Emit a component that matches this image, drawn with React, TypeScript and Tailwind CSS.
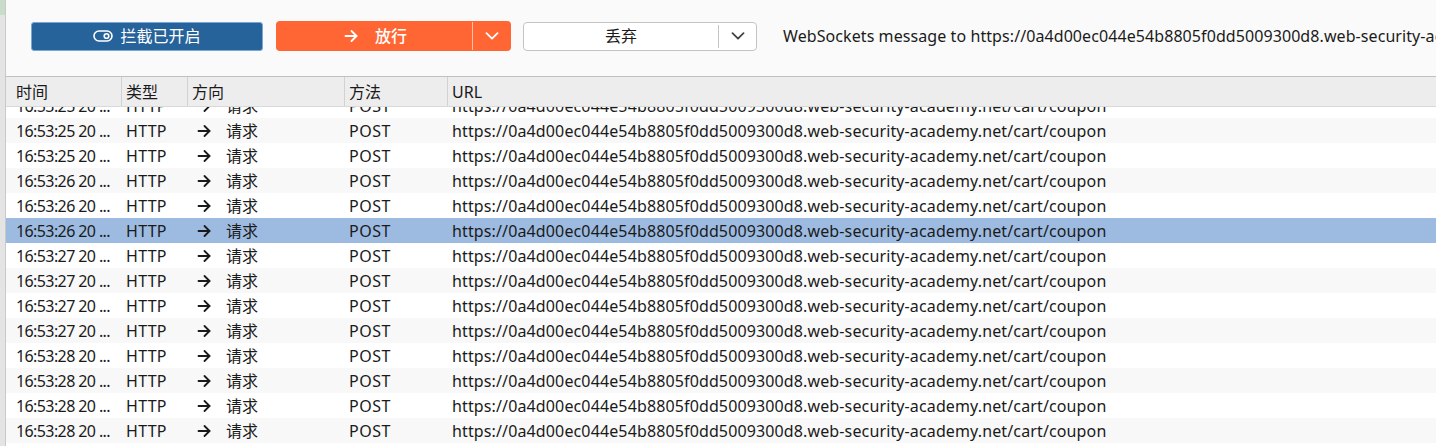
import React from "react";

const URL = "https://0a4d00ec044e54b8805f0dd5009300d8.web-security-academy.net/cart/coupon";
const times = [
  "16:53:25",
  "16:53:25",
  "16:53:25",
  "16:53:26",
  "16:53:26",
  "16:53:26",
  "16:53:27",
  "16:53:27",
  "16:53:27",
  "16:53:27",
  "16:53:28",
  "16:53:28",
  "16:53:28",
  "16:53:28",
  "16:53:28",
];

function Arrow({ className = "" }: { className?: string }) {
  return (
    <svg width="14" height="14" viewBox="0 0 14 14" className={className} fill="none" stroke="currentColor" strokeWidth="1.8" strokeLinecap="round" strokeLinejoin="round">
      <path d="M1.5 7h11" />
      <path d="M7.5 2l5 5-5 5" />
    </svg>
  );
}

function Chevron({ className = "" }: { className?: string }) {
  return (
    <svg width="14" height="8" viewBox="0 0 14 8" className={className} fill="none" stroke="currentColor" strokeWidth="1.8" strokeLinecap="round" strokeLinejoin="round">
      <path d="M1.5 1.2l5.5 5.5 5.5-5.5" />
    </svg>
  );
}

function ToggleIcon() {
  return (
    <svg width="20" height="12" viewBox="0 0 20 12" fill="none" stroke="white" strokeWidth="1.6">
      <rect x="1" y="1" width="18" height="10" rx="5" />
      <circle cx="13.5" cy="6" r="2.3" />
    </svg>
  );
}

export default function App() {
  const font = { fontFamily: '"Noto Sans", "Noto Sans CJK SC", sans-serif' };
  return (
    <div className="flex h-[446px] w-[1436px] overflow-hidden bg-white text-[16px] text-[#1a1a1a]" style={font}>
      <div className="flex w-[6px] shrink-0 flex-col border-r border-[#c9c9c9] bg-[#e4e4e4]">
        <div className="h-[15px] bg-[#c7dcc9]" />
      </div>
      <div className="flex min-w-0 flex-1 flex-col">
        <div className="flex h-[76px] shrink-0 items-center overflow-hidden whitespace-nowrap bg-[#fafafa] pb-[4px] pl-[25px]">
          <button className="flex h-[29px] w-[232px] shrink-0 items-center justify-center gap-[7px] rounded-[3px] border border-[#79a6d6] bg-[#27639b] text-white">
            <ToggleIcon />
            <span>拦截已开启</span>
          </button>
          <div className="ml-[13px] flex h-[30px] w-[235px] shrink-0 overflow-hidden rounded-[4px] bg-[#ff6633] text-white">
            <div className="flex flex-1 items-center justify-center gap-[17px] pl-[3px]">
              <Arrow />
              <span className="font-medium">放行</span>
            </div>
            <div className="my-[1px] w-px bg-[#ffc2a8]" />
            <div className="flex w-[38px] items-center justify-center">
              <Chevron />
            </div>
          </div>
          <div className="ml-[12px] flex h-[29px] w-[234px] shrink-0 overflow-hidden rounded-[4px] border border-[#c4c4c4] bg-white">
            <div className="flex flex-1 items-center justify-center">丢弃</div>
            <div className="my-[2px] w-px bg-[#c4c4c4]" />
            <div className="flex w-[37px] items-center justify-center text-[#444]">
              <Chevron />
            </div>
          </div>
          <div className="ml-[26px] shrink-0 text-[16px] tracking-[0.08px]">WebSockets message to https://0a4d00ec044e54b8805f0dd5009300d8.web-security-academy.net/</div>
        </div>
        <div className="flex h-[31px] shrink-0 border-t border-b border-t-[#c2bec2] border-b-[#d9d9d9] bg-[#ededed]">
          <div className="flex w-[116px] items-center border-r border-[#d2d2d2] pl-[10px]">时间</div>
          <div className="flex w-[66px] items-center border-r border-[#d2d2d2] pl-[4px]">类型</div>
          <div className="flex w-[157px] items-center border-r border-[#d2d2d2] pl-[4px]">方向</div>
          <div className="flex w-[103px] items-center border-r border-[#d2d2d2] pl-[4px]">方法</div>
          <div className="flex flex-1 items-center pl-[4px]">URL</div>
        </div>
        <div className="min-h-0 flex-1 overflow-hidden">
          <div className="-mt-[14px]">
            {times.map((t, i) => {
              const selected = i === 5;
              const bg = selected ? "bg-[#9dbbe1]" : i % 2 === 0 ? "bg-white" : "bg-[#f8f8f8]";
              return (
                <div key={i} className={`flex h-[25px] items-center whitespace-nowrap pt-[1px] ${bg}`}>
                  <div className="w-[116px] pl-[10px] tracking-[-0.6px]">{t} 20 ...</div>
                  <div className="w-[66px] pl-[4px] tracking-[0.3px]">HTTP</div>
                  <div className="flex w-[157px] items-center pl-[9px]">
                    <Arrow />
                    <span className="ml-[15px]">请求</span>
                  </div>
                  <div className="w-[103px] pl-[4px] tracking-[0.5px]">POST</div>
                  <div className="flex-1 pl-[4px] tracking-[0.13px]">{URL}</div>
                </div>
              );
            })}
          </div>
        </div>
      </div>
    </div>
  );
}
